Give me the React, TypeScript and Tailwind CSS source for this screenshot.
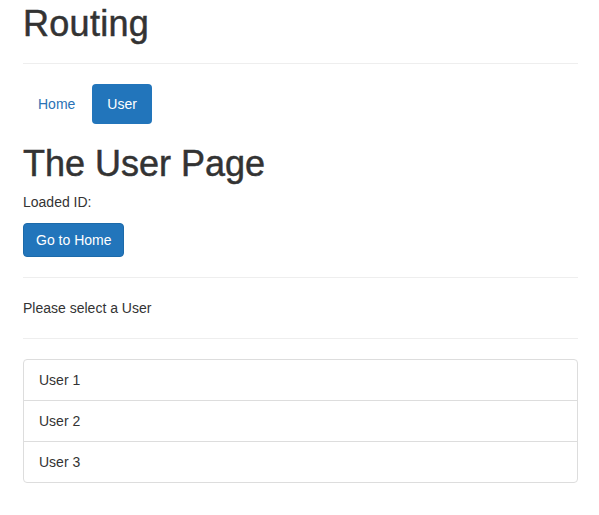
export default function App() {
    const users = ['User 1', 'User 2', 'User 3'];

    return (
        <div className="flex flex-col pl-[23px] pr-[21px] font-['Liberation_Sans',Arial,sans-serif] text-[14px] leading-[20px] text-[#333]">
            <h1 className="mt-[4px] text-[36px] leading-[40px] font-normal tracking-[0.3px] [-webkit-text-stroke:0.5px_#333]">Routing</h1>
            <hr className="mt-[19px] mb-[20px] border-0 border-t border-[#eee]" />

            {/* Nav pills */}
            <ul className="flex gap-[2px]">
                <li>
                    <a href="#" className="block rounded-[4px] px-[15px] py-[10px] text-[#2a72b5]">Home</a>
                </li>
                <li>
                    <a href="#" className="block rounded-[4px] px-[15px] py-[10px] bg-[#2275bb] text-white">User</a>
                </li>
            </ul>

            <h1 className="mt-[20px] text-[36px] leading-[40px] font-normal [-webkit-text-stroke:0.5px_#333]">The User Page</h1>
            <p className="mt-[8px]">Loaded ID:</p>
            <div className="mt-[11px]">
                <button className="h-[34px] rounded-[4px] border border-[#1c6aaa] bg-[#2275bb] px-[12px] text-white">
                    Go to Home
                </button>
            </div>

            <hr className="mt-[20px] mb-[20px] border-0 border-t border-[#eee]" />
            <p>Please select a User</p>
            <hr className="mt-[20px] mb-[20px] border-0 border-t border-[#eee]" />

            {/* List group */}
            <ul className="rounded-[4px] border border-[#ddd] divide-y divide-[#ddd]">
                {users.map((u) => (
                    <li key={u} className="px-[15px] py-[10px]">{u}</li>
                ))}
            </ul>
        </div>
    );
}
